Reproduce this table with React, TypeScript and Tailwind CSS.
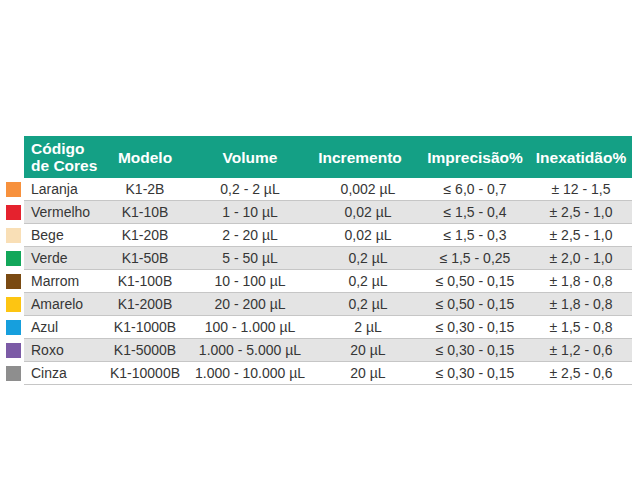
import { FunctionComponent } from "react";

type Row = {
  swatch: string;
  cor: string;
  modelo: string;
  volume: string;
  incremento: string;
  imprecisao: string;
  inexatidao: string;
};

const rows: Row[] = [
  { swatch: "bg-[#f7913d]", cor: "Laranja", modelo: "K1-2B", volume: "0,2 - 2 µL", incremento: "0,002 µL", imprecisao: "≤ 6,0 - 0,7", inexatidao: "± 12 - 1,5" },
  { swatch: "bg-[#e5222e]", cor: "Vermelho", modelo: "K1-10B", volume: "1 - 10 µL", incremento: "0,02 µL", imprecisao: "≤ 1,5 - 0,4", inexatidao: "± 2,5 - 1,0" },
  { swatch: "bg-[#f9dfb6]", cor: "Bege", modelo: "K1-20B", volume: "2 - 20 µL", incremento: "0,02 µL", imprecisao: "≤ 1,5 - 0,3", inexatidao: "± 2,5 - 1,0" },
  { swatch: "bg-[#12a75a]", cor: "Verde", modelo: "K1-50B", volume: "5 - 50 µL", incremento: "0,2 µL", imprecisao: "≤ 1,5 - 0,25", inexatidao: "± 2,0 - 1,0" },
  { swatch: "bg-[#7a4a12]", cor: "Marrom", modelo: "K1-100B", volume: "10 - 100 µL", incremento: "0,2 µL", imprecisao: "≤ 0,50 - 0,15", inexatidao: "± 1,8 - 0,8" },
  { swatch: "bg-[#fdc512]", cor: "Amarelo", modelo: "K1-200B", volume: "20 - 200 µL", incremento: "0,2 µL", imprecisao: "≤ 0,50 - 0,15", inexatidao: "± 1,8 - 0,8" },
  { swatch: "bg-[#169fdd]", cor: "Azul", modelo: "K1-1000B", volume: "100 - 1.000 µL", incremento: "2 µL", imprecisao: "≤ 0,30 - 0,15", inexatidao: "± 1,5 - 0,8" },
  { swatch: "bg-[#7c5ba6]", cor: "Roxo", modelo: "K1-5000B", volume: "1.000 - 5.000 µL", incremento: "20 µL", imprecisao: "≤ 0,30 - 0,15", inexatidao: "± 1,2 - 0,6" },
  { swatch: "bg-[#8e8e8e]", cor: "Cinza", modelo: "K1-10000B", volume: "1.000 - 10.000 µL", incremento: "20 µL", imprecisao: "≤ 0,30 - 0,15", inexatidao: "± 2,5 - 0,6" },
];

const App: FunctionComponent = () => {
  return (
    <div className="w-[640px] h-[480px] bg-white pt-[136px] pl-[6px] font-['Liberation_Sans',Arial,sans-serif]">
      {/* header */}
      <div className="flex flex-row">
        <div className="w-[18px] shrink-0" />
        <div className="w-[608px] h-[42px] bg-[#14a085] flex flex-row items-center text-white font-bold text-[15.5px] leading-[17px] whitespace-nowrap">
          <div className="w-[71px] pl-[7px]">
            Código
            <br />
            de Cores
          </div>
          <div className="w-[100px] text-center">Modelo</div>
          <div className="w-[110px] text-center">Volume</div>
          <div className="w-[110px] text-center">Incremento</div>
          <div className="w-[120px] text-center">Imprecisão%</div>
          <div className="w-[92px] text-center">Inexatidão%</div>
        </div>
      </div>
      {/* body */}
      {rows.map((r, i) => (
        <div key={r.cor} className="flex flex-row items-center">
          <div className={`w-[15px] h-[15px] shrink-0 mr-[3px] ${r.swatch}`} />
          <div
            className={`w-[608px] h-[23px] flex flex-row items-center border-b border-[#c6c6c6] text-[14px] text-[#363636] whitespace-nowrap ${
              i % 2 === 1 ? "bg-[#e4e4e4]" : "bg-white"
            }`}
          >
            <div className="w-[71px] pl-[7px]">{r.cor}</div>
            <div className="w-[100px] text-center">{r.modelo}</div>
            <div className="w-[110px] text-center">{r.volume}</div>
            <div className="w-[110px] pl-[16px] text-center">{r.incremento}</div>
            <div className="w-[120px] text-center">{r.imprecisao}</div>
            <div className="w-[92px] text-center">{r.inexatidao}</div>
          </div>
        </div>
      ))}
    </div>
  );
};

export default App;
